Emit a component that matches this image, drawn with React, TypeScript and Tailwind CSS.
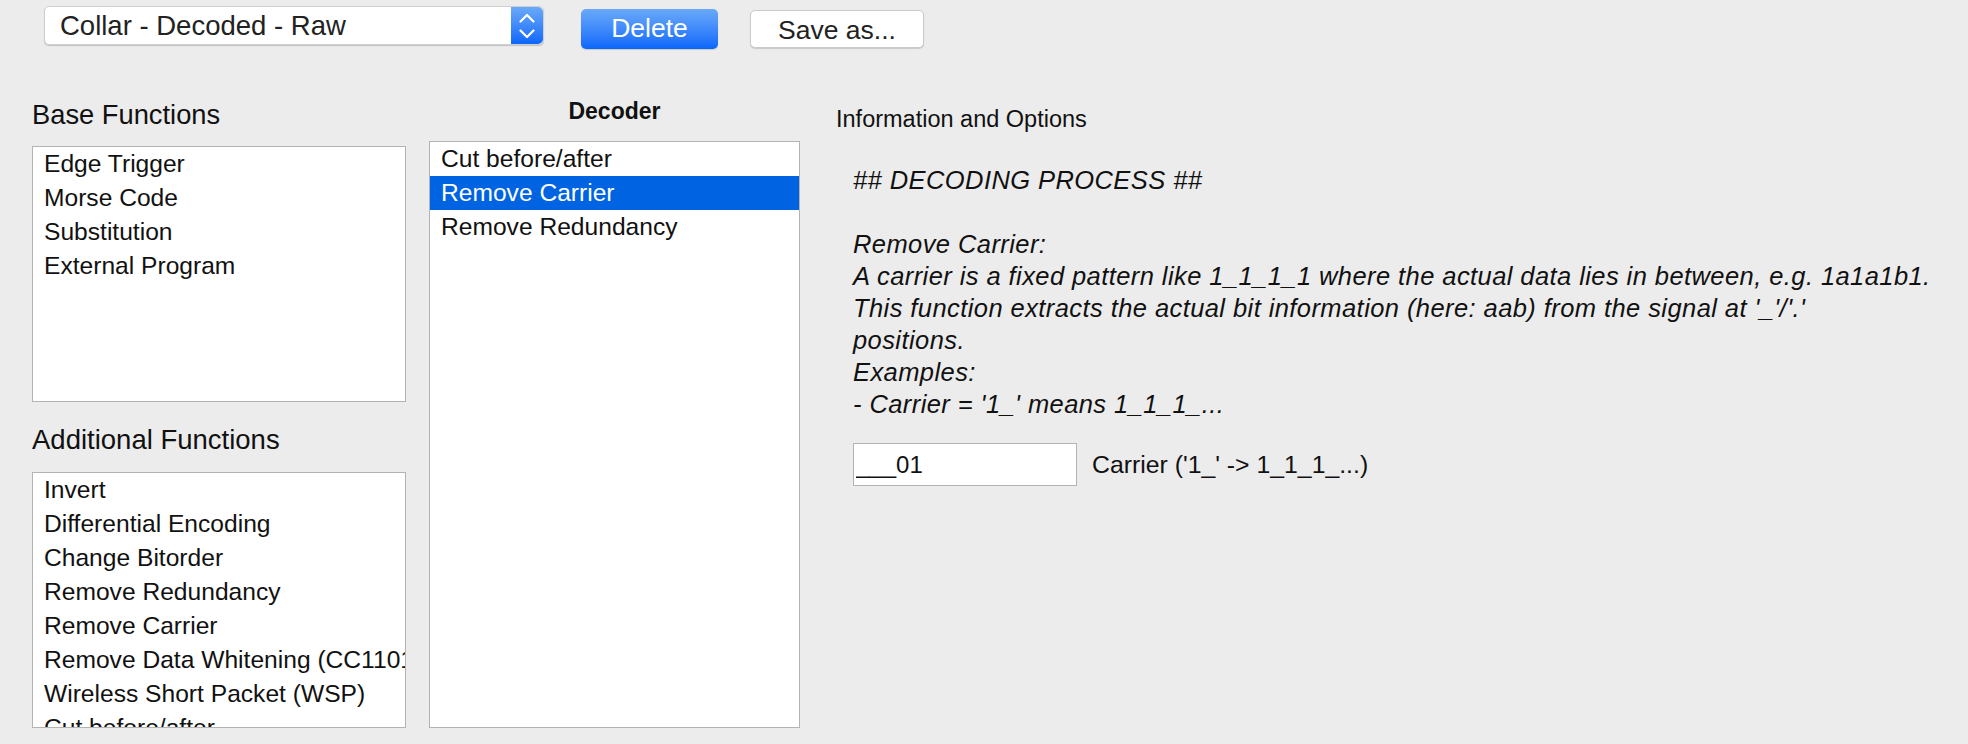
import React from 'react';

const baseFunctions = ['Edge Trigger', 'Morse Code', 'Substitution', 'External Program'];

const additionalFunctions = [
  'Invert',
  'Differential Encoding',
  'Change Bitorder',
  'Remove Redundancy',
  'Remove Carrier',
  'Remove Data Whitening (CC1101)',
  'Wireless Short Packet (WSP)',
  'Cut before/after',
];

const decoderChain = ['Cut before/after', 'Remove Carrier', 'Remove Redundancy'];

const infoLines = [
  '## DECODING PROCESS ##',
  '',
  'Remove Carrier:',
  'A carrier is a fixed pattern like 1_1_1_1 where the actual data lies in between, e.g. 1a1a1b1.',
  "This function extracts the actual bit information (here: aab) from the signal at '_'/'.'",
  'positions.',
  'Examples:',
  "- Carrier = '1_' means 1_1_1_...",
];

interface ListBoxProps {
  items: string[];
  selected?: number;
  className?: string;
}

const ListBox: React.FC<ListBoxProps> = ({ items, selected = -1, className = '' }) => (
  <div className={`overflow-hidden border border-[#b3b3b3] bg-white ${className}`}>
    {items.map((item, index) => (
      <div
        key={index}
        className={`h-[34px] whitespace-nowrap pl-[11px] text-[24.6px] leading-[34px] ${
          index === selected ? 'bg-[#0063e1] text-white' : 'text-[#111]'
        }`}
      >
        {item}
      </div>
    ))}
  </div>
);

const Stepper = () => (
  <div className="flex h-full w-[32px] items-center justify-center rounded-r-[5px] bg-gradient-to-b from-[#6aa9f9] to-[#0a66fb]">
    <svg width="16" height="26" viewBox="0 0 16 26" fill="none">
      <path d="M1.5 8.5 L8 2 L14.5 8.5" stroke="white" strokeWidth="2.2" strokeLinecap="round" strokeLinejoin="round" />
      <path d="M1.5 17.5 L8 24 L14.5 17.5" stroke="white" strokeWidth="2.2" strokeLinecap="round" strokeLinejoin="round" />
    </svg>
  </div>
);

export default function App() {
  return (
    <div className="h-[744px] w-[1968px] overflow-hidden bg-[#ececec] font-['Liberation_Sans',Arial,sans-serif] text-[#111]">
      {/* toolbar */}
      <div className="flex items-start pl-[44px] pt-[6px]">
        <div className="flex h-[39px] w-[500px] items-center rounded-[5px] border border-[#cfcfcf] bg-white shadow-[0_1px_1px_rgba(0,0,0,0.18)]">
          <div className="flex-1 pl-[15px] text-[27.5px] text-[#222]">Collar - Decoded - Raw</div>
          <Stepper />
        </div>
        <button className="ml-[37px] mt-[3px] h-[40px] w-[137px] rounded-[5px] bg-gradient-to-b from-[#6aa9f9] to-[#0a66fb] text-[26.5px] text-white shadow-[0_1px_1px_rgba(0,0,0,0.15)]">
          Delete
        </button>
        <button className="ml-[32px] mt-[4px] h-[38px] w-[174px] rounded-[5px] border border-[#cacaca] bg-white text-[26.5px] text-[#222] shadow-[0_1px_1px_rgba(0,0,0,0.15)]">
          Save as...
        </button>
      </div>

      <div className="mt-[48px] flex items-start">
        {/* left column */}
        <div className="ml-[32px] flex w-[374px] flex-col">
          <div className="mt-[2px] h-[32px] text-[27.3px] leading-[32px]">Base Functions</div>
          <ListBox items={baseFunctions} className="mt-[15px] h-[256px]" />
          <div className="mt-[22px] h-[32px] text-[27.5px] leading-[32px]">Additional Functions</div>
          <ListBox items={additionalFunctions} className="mt-[16px] h-[256px]" />
        </div>

        {/* decoder column */}
        <div className="ml-[23px] flex w-[371px] flex-col">
          <div className="h-[28px] text-center text-[23px] font-bold leading-[28px]">Decoder</div>
          <ListBox items={decoderChain} selected={1} className="mt-[16px] h-[587px]" />
        </div>

        {/* info column */}
        <div className="ml-[36px] mt-[8px] flex flex-1 flex-col">
          <div className="h-[28px] text-[23.5px] leading-[28px]">Information and Options</div>
          <div className="mt-[31px] pl-[17px] text-[25.5px] italic leading-[32px] tracking-[0.42px]">
            {infoLines.map((line, i) => (
              <div key={i} className="h-[32px] whitespace-nowrap">
                {line}
              </div>
            ))}
          </div>
          <div className="mt-[23px] flex items-center pl-[17px]">
            <input
              readOnly
              value="___01"
              className="h-[43px] w-[224px] border border-[#b3b3b3] bg-white pl-[2px] font-['Liberation_Sans',Arial,sans-serif] text-[24px] text-[#111] outline-none"
            />
            <span className="ml-[15px] text-[24.8px]">Carrier ('1_' -&gt; 1_1_1_...)</span>
          </div>
        </div>
      </div>
    </div>
  );
}
